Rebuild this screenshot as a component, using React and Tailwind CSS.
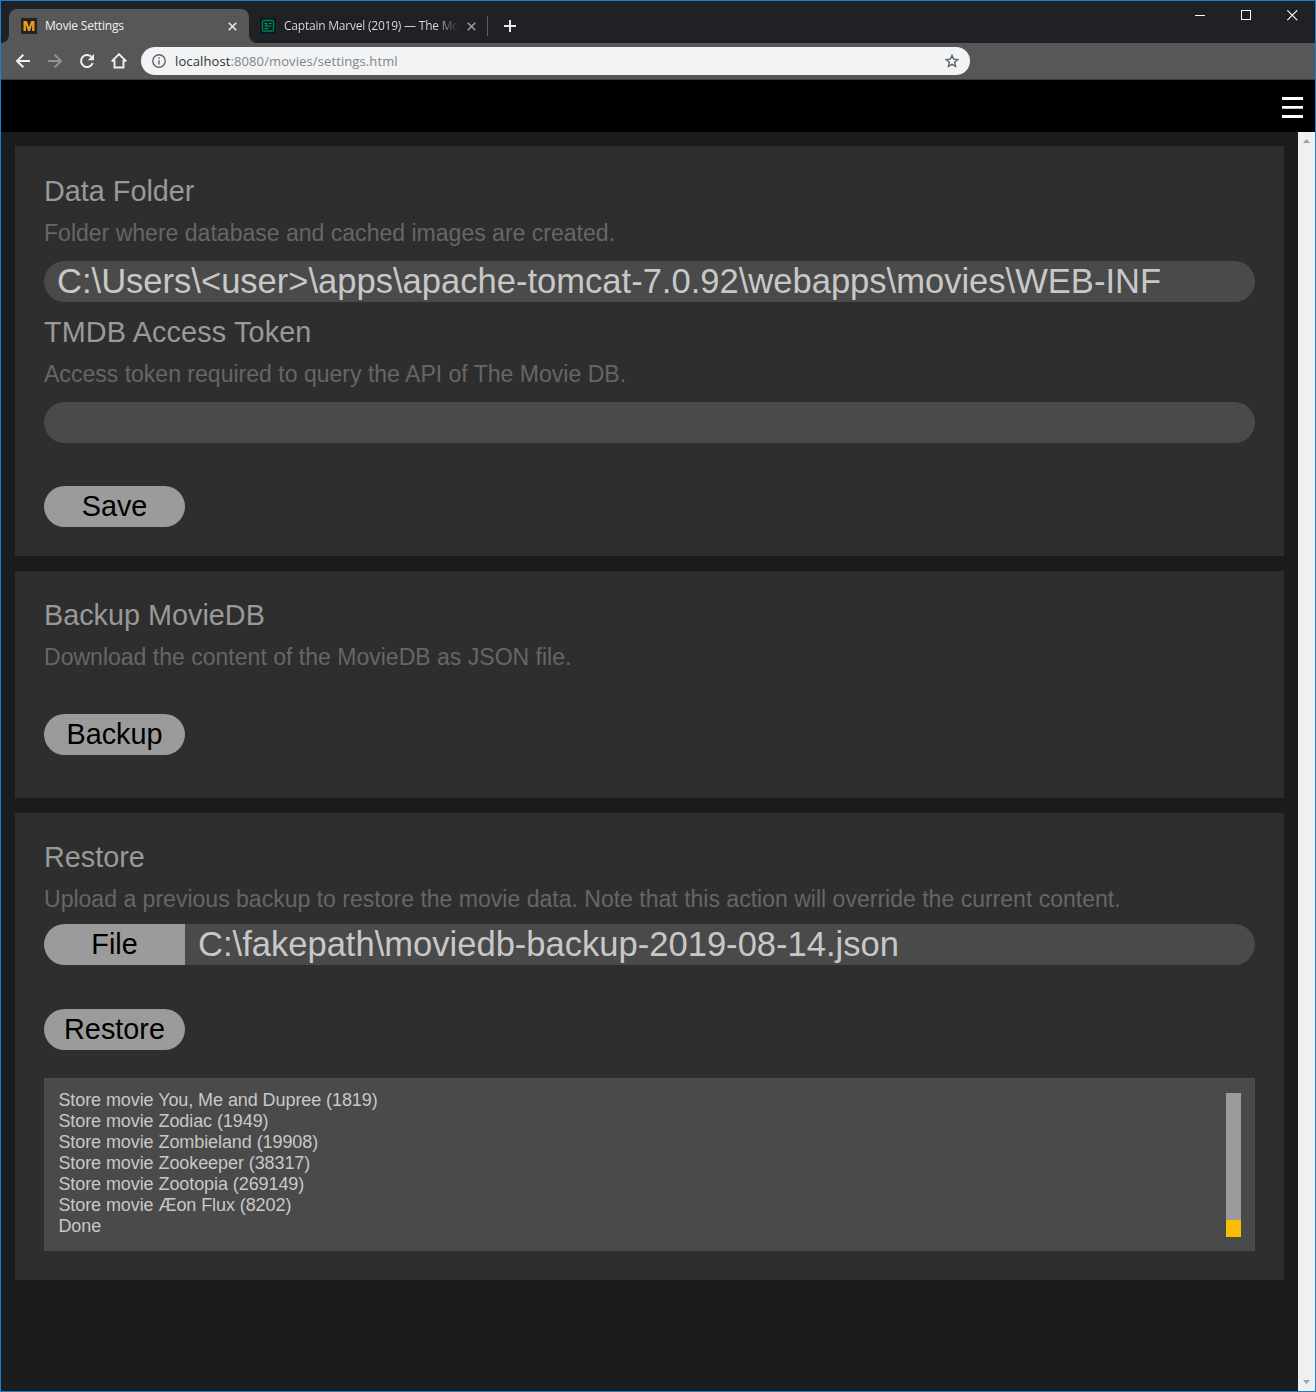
const logLines = [
  'Store movie You, Me and Dupree (1819)',
  'Store movie Zodiac (1949)',
  'Store movie Zombieland (19908)',
  'Store movie Zookeeper (38317)',
  'Store movie Zootopia (269149)',
  'Store movie Æon Flux (8202)',
  'Done',
];

function TabClose({ className }) {
  return (
    <svg className={className} width="9" height="9" viewBox="0 0 9 9" fill="none" stroke="currentColor" strokeWidth="1.6">
      <path d="M.7.7l7.6 7.6M8.3.7L.7 8.3" />
    </svg>
  );
}

function TabStrip() {
  return (
    <div className="flex h-[42px] items-start bg-[#202124]">
      <div className="flex h-[42px] w-2 shrink-0 items-end">
        <svg width="8" height="8" viewBox="0 0 8 8" fill="#575757">
          <path d="M8 0v8H0a8 8 0 0 0 8-8z" />
        </svg>
      </div>
      <div className="mt-2 flex h-[34px] w-[240px] shrink-0 items-center rounded-t-lg bg-[#575757] pl-3 pr-3">
        <svg width="16" height="16" viewBox="0 0 16 16">
          <rect width="16" height="16" fill="#222" />
          <path d="M2.500 13V3h3.300L8 9l2.200-6h3.300v10h-2.400V6.500L9 13H7L4.900 6.500V13z" fill="#ee9a19" />
        </svg>
        <span className="ml-2 grow whitespace-nowrap text-[12px] leading-4 tracking-[-0.18px] text-[#f1f1f1]">Movie Settings</span>
        <TabClose className="text-[#e8e8e8]" />
      </div>
      <div className="flex h-[42px] w-2 shrink-0 items-end">
        <svg width="8" height="8" viewBox="0 0 8 8" fill="#575757">
          <path d="M0 0v8h8a8 8 0 0 1-8-8z" />
        </svg>
      </div>
      <div className="mt-2 flex h-[34px] items-center pl-[3px]">
        <svg width="16" height="16" viewBox="0 0 16 16" fill="none">
          <rect width="16" height="16" fill="#081c24" />
          <rect x="2.500" y="2.500" width="11" height="10.500" rx="1.500" stroke="#01814f" strokeWidth="1.300" />
          <path d="M4.500 5.500h3M4.500 8h7M4.500 10.500h4M9 5.500h2.500M6 5v3" stroke="#01a263" />
        </svg>
        <span className="ml-2 w-[176px] whitespace-nowrap bg-linear-to-r from-[#dfe1e5] from-[86%] to-[#202124] bg-clip-text text-[12px] leading-4 tracking-[-0.22px] text-transparent">
          Captain Marvel (2019) — The Mo
        </span>
        <TabClose className="ml-[7px] text-[#9a9b9d]" />
        <div className="ml-[11px] h-5 w-px bg-[#5d5e61]" />
        <svg className="ml-4" width="12" height="12" viewBox="0 0 12 12" stroke="#e8eaed" strokeWidth="2">
          <path d="M6 0v12M0 6h12" />
        </svg>
      </div>
      <div className="ml-auto mr-[17px] mt-[9px] flex gap-[35px]">
        <svg width="11" height="11" viewBox="0 0 11 11" stroke="#fff"><path d="M0 5.500h10" /></svg>
        <svg width="11" height="11" viewBox="0 0 11 11" stroke="#fff" fill="none"><rect x=".5" y=".5" width="9" height="9" /></svg>
        <svg width="11" height="11" viewBox="0 0 11 11" stroke="#fff" strokeWidth="1.100"><path d="M.3.3l9.900 9.900M10.200.3L.3 10.200" /></svg>
      </div>
    </div>
  );
}

function Toolbar() {
  return (
    <div className="flex h-[37px] items-start border-b border-[#3c3c3c] bg-[#575757] pl-[14px]">
      <div className="flex h-9 w-[126px] items-center gap-4">
        <svg width="16" height="16" viewBox="0 0 16 16" fill="none" stroke="#f1f1f1" strokeWidth="2">
          <path d="M15 8H2M8.300 1.700L2 8l6.300 6.300" />
        </svg>
        <svg width="16" height="16" viewBox="0 0 16 16" fill="none" stroke="#929292" strokeWidth="2">
          <path d="M1 8h13M7.700 1.700L14 8l-6.300 6.300" />
        </svg>
        <svg width="16" height="16" viewBox="0 0 16 16" fill="none">
          <path d="M13.700 10A6 6 0 1 1 12.300 3.800" stroke="#f1f1f1" strokeWidth="2" />
          <path d="M15 1v6.300H8.700z" fill="#f1f1f1" />
        </svg>
        <svg width="16" height="16" viewBox="0 0 16 16" fill="none" stroke="#f1f1f1" strokeWidth="1.900">
          <path d="M.7 8.500L8 1.200l7.300 7.300M3.500 7v7.500h9V7" />
        </svg>
      </div>
      <div className="mt-1 flex h-7 w-[829px] items-center rounded-full bg-[#f1f3f4] pl-[11px] pr-[11px]">
        <svg width="14" height="14" viewBox="0 0 14 14" fill="none" stroke="#5f6368" strokeWidth="1.400">
          <circle cx="7" cy="7" r="6.200" />
          <path d="M7 6.200v4.300M7 3.500v1.500" />
        </svg>
        <span className="ml-[9px] grow text-[13px] leading-5 tracking-[0.11px] text-[#80868b]">
          <span className="text-[#303236]">localhost</span>:8080/movies/settings.html
        </span>
        <svg width="14" height="14" viewBox="0 0 14 14" fill="none" stroke="#5f6368" strokeWidth="1.400">
          <path d="M7 1.400l1.600 3.700 4.200.4-3.200 2.800 1 4.100L7 10.300l-3.600 2.100 1-4.100-3.200-2.800 4.200-.4z" />
        </svg>
      </div>
    </div>
  );
}

function Heading({ children, className = '' }) {
  return <h2 className={`h-[33px] whitespace-nowrap text-[28.8px] leading-[33px] text-[#999] ${className}`}>{children}</h2>;
}

function Description({ children }) {
  return <p className="mt-3 h-[27px] whitespace-nowrap text-[23.040px] leading-[27px] text-[#666]">{children}</p>;
}

function Button({ children, className }) {
  return (
    <button className={`block h-[41px] w-[141px] shrink-0 bg-[#9b9b9b] text-center text-[28.8px] leading-[41px] text-black ${className}`}>
      {children}
    </button>
  );
}

function Field({ children, className }) {
  return (
    <div className={`h-[41px] grow whitespace-pre bg-[#4a4a4a] pl-[13px] text-[34.560px] leading-[41px] text-[#c8c8c8] ${className}`}>
      {children}
    </div>
  );
}

function ScrollArrow({ down }) {
  return (
    <svg width="7" height="4" viewBox="0 0 7 4" fill="#a0a0a0">
      <path d={down ? 'M0 0h7L3.500 4z' : 'M0 4h7L3.500 0z'} />
    </svg>
  );
}

export default function App() {
  return (
    <div className="flex h-[1392px] w-[1316px] flex-col overflow-hidden border border-[#1a80d4] bg-[#1c1c1c] font-['Liberation_Sans',Arial,sans-serif]">
      <div className="font-['Open_Sans','Noto_Sans',sans-serif]">
        <TabStrip />
        <Toolbar />
      </div>
      <div className="flex h-[52px] shrink-0 justify-end bg-black pr-3 pt-[17px]">
        <svg width="21" height="21" viewBox="0 0 21 21" fill="#fff">
          <path d="M0 0h21v3H0zM0 9h21v2.700H0zM0 18h21v3H0z" />
        </svg>
      </div>
      <div className="flex min-h-0 grow">
        <main className="flex grow flex-col gap-[15px] pl-[14px] pr-[14px] pt-[14px]">
          <section className="h-[410px] bg-[#2e2e2e] px-[29px] pt-[29px]">
            <Heading>Data Folder</Heading>
            <Description>Folder where database and cached images are created.</Description>
            <Field className="mt-[14px] rounded-full">{'C:\\Users\\<user>\\apps\\apache-tomcat-7.0.92\\webapps\\movies\\WEB-INF'}</Field>
            <div className="mt-[14px]">
              <Heading className="tracking-[0.14px]">TMDB Access Token</Heading>
              <Description>Access token required to query the API of The Movie DB.</Description>
              <Field className="mt-[14px] rounded-full" />
            </div>
            <Button className="mt-[43px] rounded-full">Save</Button>
          </section>
          <section className="h-[227px] bg-[#2e2e2e] px-[29px] pt-7">
            <Heading>Backup MovieDB</Heading>
            <Description>Download the content of the MovieDB as JSON file.</Description>
            <Button className="mt-[43px] rounded-full">Backup</Button>
          </section>
          <section className="h-[467px] bg-[#2e2e2e] px-[29px] pt-7">
            <Heading>Restore</Heading>
            <Description>Upload a previous backup to restore the movie data. Note that this action will override the current content.</Description>
            <div className="mt-[11px] flex">
              <Button className="rounded-l-full">File</Button>
              <Field className="rounded-r-full">{'C:\\fakepath\\moviedb-backup-2019-08-14.json'}</Field>
            </div>
            <Button className="mt-[44px] rounded-full">Restore</Button>
            <div className="mt-7 flex h-[173px] justify-between bg-[#4a4a4a] pl-[14.4px] pr-[14px] pt-3">
              <div className="text-[18px] leading-[21px] tracking-[-0.08px] text-[#c8c8c8]">
                {logLines.map((line) => (
                  <div key={line}>{line}</div>
                ))}
              </div>
              <div className="mt-[3px] flex h-36 w-[15px] flex-col justify-end bg-[#9b9b9b]">
                <div className="h-[17px] bg-[#fbbc04]" />
              </div>
            </div>
          </section>
        </main>
        <div className="flex w-[17px] shrink-0 flex-col items-center justify-between bg-[#f0f0f0] py-[7px]">
          <ScrollArrow />
          <ScrollArrow down />
        </div>
      </div>
    </div>
  );
}
